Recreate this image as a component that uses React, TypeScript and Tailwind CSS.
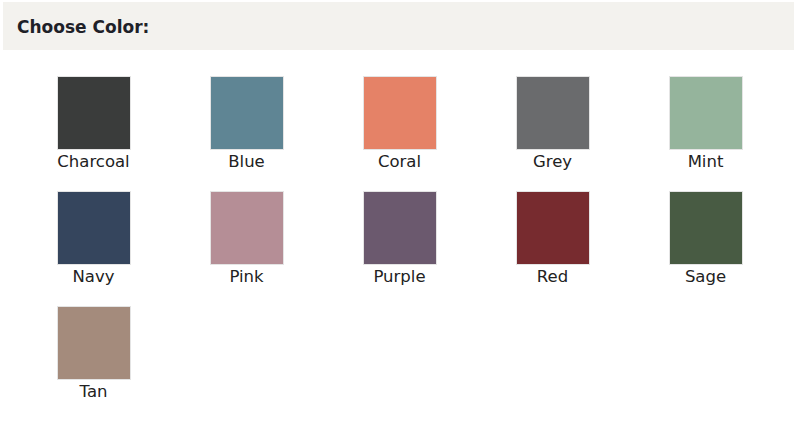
const colors = [
  { name: 'Charcoal', hex: '#3a3c3b' },
  { name: 'Blue', hex: '#5f8594' },
  { name: 'Coral', hex: '#e58267' },
  { name: 'Grey', hex: '#6a6b6d' },
  { name: 'Mint', hex: '#95b49c' },
  { name: 'Navy', hex: '#35455d' },
  { name: 'Pink', hex: '#b58e96' },
  { name: 'Purple', hex: '#6b596e' },
  { name: 'Red', hex: '#772b2f' },
  { name: 'Sage', hex: '#485b43' },
  { name: 'Tan', hex: '#a48b7c' },
];

export default function App() {
  return (
    <div className="w-[794px] h-[430px] bg-white font-['DejaVu_Sans',Verdana,sans-serif] text-[#222]">
      <div className="mt-[2px] ml-[3px] h-[48px] bg-[#f3f2ee] flex items-center pl-[14px] pt-[3px]">
        <h2 className="text-[17px] font-bold text-[#1e2128]">Choose Color:</h2>
      </div>

      <div className="grid grid-cols-[repeat(5,153px)] ml-[17px] mt-[26px] gap-y-[18px]">
        {colors.map((c) => (
          <div key={c.name} className="flex flex-col items-center">
            <div
              className="w-[74px] h-[74px] border border-[#e4e4e4]"
              style={{ backgroundColor: c.hex }}
            />
            <span className="text-[16.5px] leading-[22px] pt-[1px]">{c.name}</span>
          </div>
        ))}
      </div>
    </div>
  );
}
